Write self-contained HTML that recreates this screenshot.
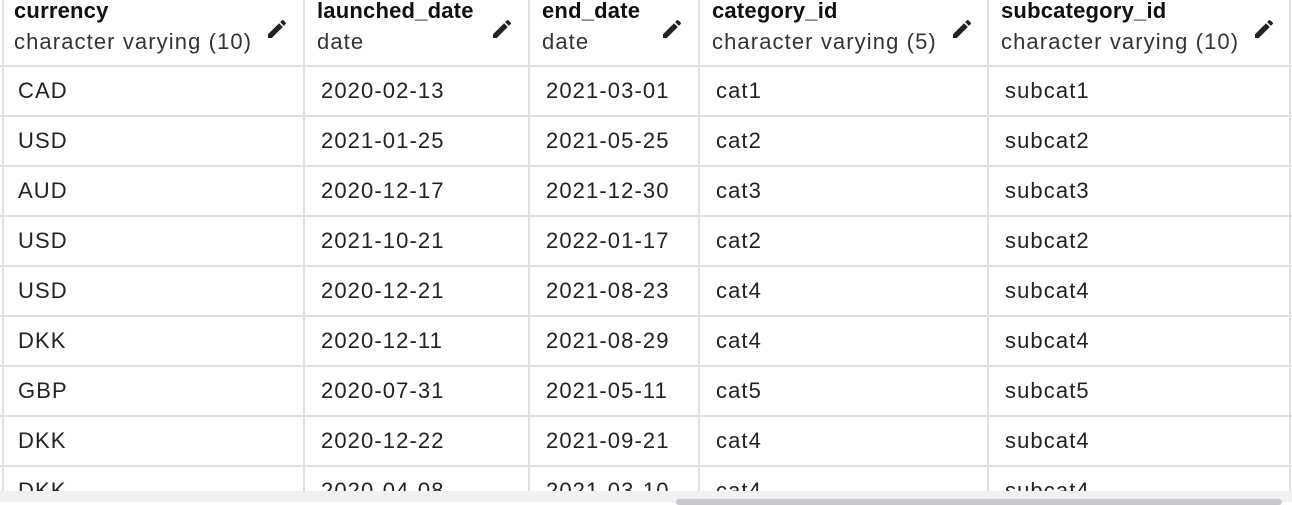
<!DOCTYPE html>
<html><head><style>
body{margin:0;width:1292px;height:502px;overflow:hidden;background:#fff;font-family:"Liberation Sans",sans-serif;color:#222;position:relative}
.v{position:absolute;top:0;height:491px;width:2px;background:#dedee3}
.h{position:absolute;left:0;width:1292px;height:2px;background:#dedee3}
.t{position:absolute;font-size:22px;letter-spacing:1.1px;white-space:nowrap;line-height:26px}
.b{font-weight:bold;font-size:22px;letter-spacing:0.2px;color:#111}
svg{position:absolute}
</style></head><body>
<div class="v" style="left:2px"></div>
<div class="v" style="left:303px"></div>
<div class="v" style="left:528px"></div>
<div class="v" style="left:698px"></div>
<div class="v" style="left:987px"></div>
<div class="v" style="left:1289px"></div>
<div id="rows"></div>
<div style="position:absolute;left:0;top:491px;width:1292px;height:11px;background:#f1f1f3"></div>
<div style="position:absolute;left:676px;top:499px;width:606px;height:6px;border-radius:3px;background:#c8c8cc"></div>
<script>
var cols=[[14,18],[317,321],[542,546],[712,716],[1001,1005]];
var hd=[["currency","character varying (10)",265],["launched_date","date",490],["end_date","date",660],["category_id","character varying (5)",950],["subcategory_id","character varying (10)",1252]];
var data=[["CAD","2020-02-13","2021-03-01","cat1","subcat1"],["USD","2021-01-25","2021-05-25","cat2","subcat2"],["AUD","2020-12-17","2021-12-30","cat3","subcat3"],["USD","2021-10-21","2022-01-17","cat2","subcat2"],["USD","2020-12-21","2021-08-23","cat4","subcat4"],["DKK","2020-12-11","2021-08-29","cat4","subcat4"],["GBP","2020-07-31","2021-05-11","cat5","subcat5"],["DKK","2020-12-22","2021-09-21","cat4","subcat4"],["DKK","2020-04-08","2021-03-10","cat4","subcat4"]];
var h="";
hd.forEach(function(c,i){
h+='<div class="t b" style="left:'+cols[i][0]+'px;top:-2px">'+c[0]+'</div>';
h+='<div class="t" style="left:'+cols[i][0]+'px;top:29px;color:#333">'+c[1]+'</div>';
h+='<svg style="left:'+c[2]+'px;top:17px" width="24" height="24" viewBox="0 0 24 24"><path d="M3 17.25V21h3.75L17.81 9.94l-3.75-3.75L3 17.25zM20.71 7.04a1 1 0 000-1.41l-2.34-2.34a1 1 0 00-1.41 0l-1.83 1.83 3.75 3.75 1.83-1.83z" fill="#222"/></svg>';
});
for(var r=0;r<9;r++){
var y=65+r*50;
h+='<div class="h" style="top:'+y+'px"></div>';
data[r].forEach(function(v,i){h+='<div class="t" style="left:'+cols[i][1]+'px;top:'+(y+13)+'px">'+v+'</div>';});
}
document.getElementById("rows").innerHTML=h;
</script>
</body></html>
